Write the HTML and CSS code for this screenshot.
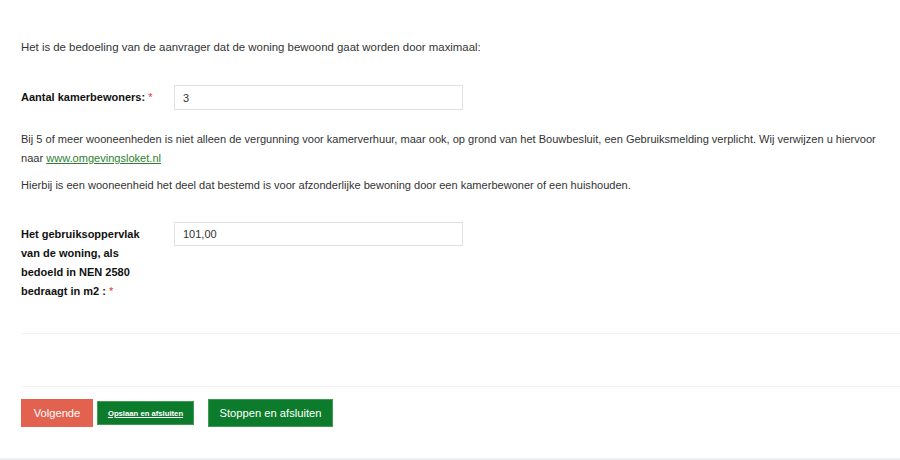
FILE: index.html
```html
<!DOCTYPE html>
<html lang="nl">
<head>
<meta charset="utf-8">
<link rel="stylesheet" href="styles.css">
</head>
<body>
<div class="page">
  <div class="content">
    <p class="intro">Het is de bedoeling van de aanvrager dat de woning bewoond gaat worden door maximaal:</p>
    <div class="row row-1">
      <label class="label">Aantal kamerbewoners: <span class="req">*</span></label>
      <div class="field"><input class="input" type="text" value="3"></div>
    </div>
    <p class="note">Bij 5 of meer wooneenheden is niet alleen de vergunning voor kamerverhuur, maar ook, op grond van het Bouwbesluit, een Gebruiksmelding verplicht. Wij verwijzen u hiervoor naar <a class="link" href="#">www.omgevingsloket.nl</a></p>
    <p class="note note-2">Hierbij is een wooneenheid het deel dat bestemd is voor afzonderlijke bewoning door een kamerbewoner of een huishouden.</p>
    <div class="row row-2">
      <label class="label label-wrap">Het gebruiksoppervlak van de woning, als bedoeld in NEN 2580 bedraagt in m2 : <span class="req">*</span></label>
      <div class="field"><input class="input" type="text" value="101,00"></div>
    </div>
  </div>
  <div class="sep sep-1"></div>
  <div class="sep sep-2"></div>
  <div class="actions">
    <button class="btn btn-red">Volgende</button>
    <button class="btn btn-green btn-small">Opslaan en afsluiten</button>
    <button class="btn btn-green btn-large">Stoppen en afsluiten</button>
  </div>
  <div class="bottom-line"></div>
</div>
</body>
</html>
```

FILE: styles.css
```css
html, body {
  margin: 0;
  padding: 0;
  background: #ffffff;
}
body {
  font-family: "Liberation Sans", Arial, sans-serif;
  font-size: 11.4px;
  color: #333333;
  width: 900px;
  height: 460px;
  overflow: hidden;
}
.page {
  display: flex;
  flex-direction: column;
}
.content {
  padding: 38px 4px 0 21px;
}
p {
  margin: 0;
  line-height: 19px;
}
.row {
  display: flex;
  align-items: flex-start;
}
.row-1 {
  margin-top: 28px;
  align-items: center;
}
.label {
  width: 153px;
  flex: none;
  font-weight: bold;
  font-size: 11px;
  color: #111;
  line-height: 19px;
}
.label-wrap {
  width: 130px;
  margin-right: 23px;
  padding-top: 3px;
}
.req {
  color: #d9363e;
  font-weight: normal;
}
.field {
  flex: none;
}
.input {
  box-sizing: border-box;
  width: 289px;
  height: 25px;
  border: 1px solid #e1e1e1;
  padding: 0 8px;
  font-family: "Liberation Sans", Arial, sans-serif;
  font-size: 11px;
  color: #333;
  background: #fff;
  outline: none;
  display: block;
}
.row-2 .input {
  height: 24px;
}
.note {
  margin-top: 20px;
  font-size: 11.05px;
}
.note-2 {
  margin-top: 8px;
}
.row-2 {
  margin-top: 27px;
}
.link {
  color: #2f8034;
  text-decoration: underline;
}
.sep {
  height: 1px;
  background: #f1f3f4;
  margin-left: 21px;
}
.sep-1 {
  margin-top: 32px;
}
.sep-2 {
  margin-top: 52px;
}
.actions {
  display: flex;
  align-items: center;
  padding-left: 21px;
  margin-top: 12px;
}
.btn {
  border: none;
  color: #fff;
  font-family: "Liberation Sans", Arial, sans-serif;
  padding: 0;
  cursor: pointer;
}
.btn-red {
  background: #e2614f;
  width: 72px;
  height: 28px;
  font-size: 11.2px;
}
.btn-green {
  background: #0c7c2c;
}
.btn-small {
  width: 97px;
  height: 24px;
  margin-left: 4px;
  font-size: 7.7px;
  font-weight: bold;
  text-decoration: underline;
  border: 1px solid #3e9a55;
}
.btn-large {
  width: 125px;
  height: 28px;
  margin-left: 14px;
  font-size: 11.2px;
  border: 1px solid #3e9a55;
}
.bottom-line {
  margin-top: 31px;
  height: 3px;
  background: #eef0f2;
}
```
